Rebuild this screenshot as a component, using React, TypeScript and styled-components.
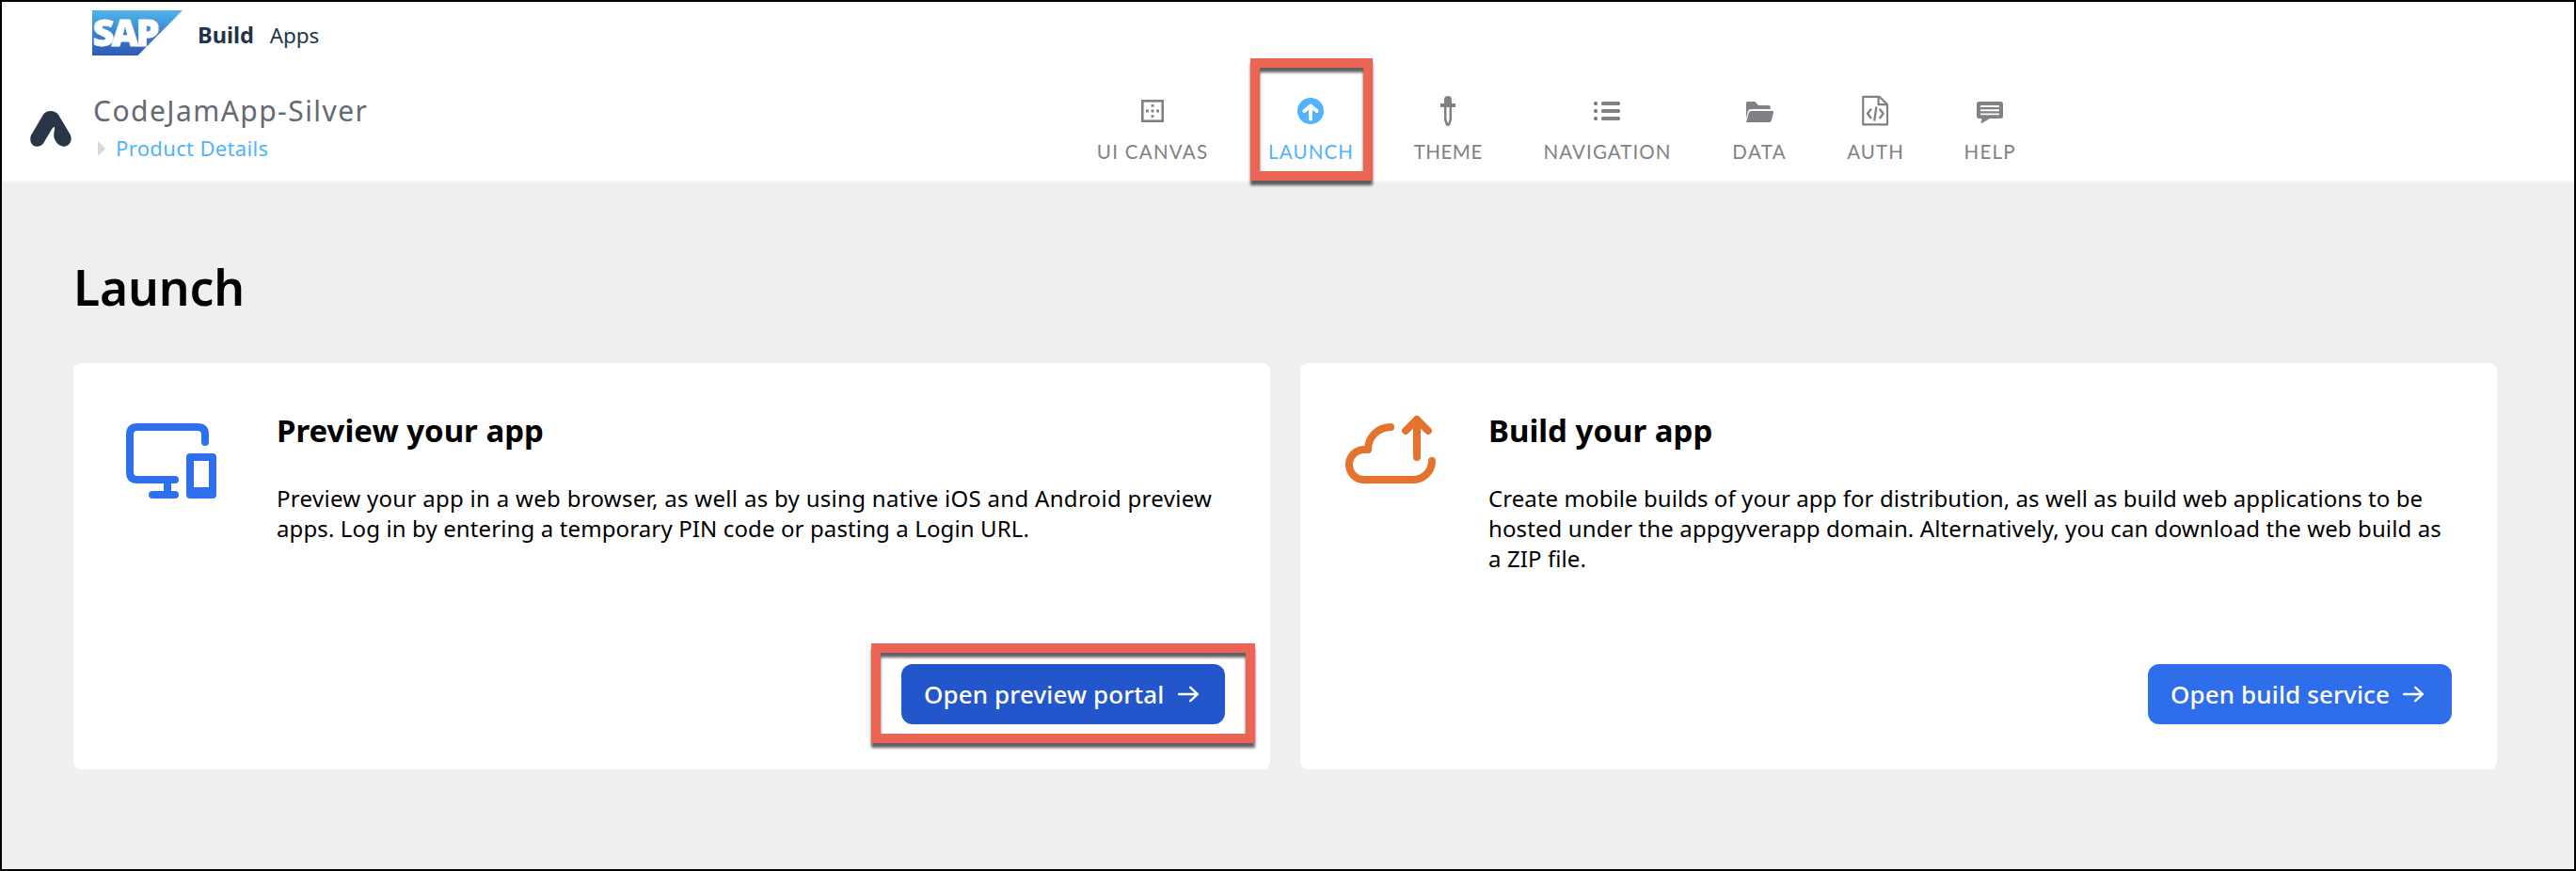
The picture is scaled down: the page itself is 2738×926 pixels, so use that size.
import React from 'react';
import styled, { createGlobalStyle } from 'styled-components';

const GlobalStyle = createGlobalStyle`
  *, *::before, *::after { box-sizing: border-box; }
  body { margin: 0; background: #000; }
`;

const Frame = styled.div`
  display: flex;
  flex-direction: column;
  width: 2738px;
  height: 926px;
  border: 2px solid #000;
  background: #eeeff1;
  color: #000;
  font-family: 'Noto Sans', 'Open Sans', sans-serif;
  overflow: hidden;
`;

const Header = styled.header`
  flex: none;
  height: 192px;
  background: #fff;
  border-bottom: 2px solid #f7f7f8;
`;

const BrandBar = styled.div`
  display: flex;
  align-items: center;
  height: 66px;
  padding-left: 96px;
  color: #223548;
`;

const BrandName = styled.span`
  margin-left: 16px;
  padding-top: 4px;
  font-size: 23.5px;
  font-weight: 700;
`;

const BrandProduct = styled.span`
  margin-left: 17px;
  padding-top: 4px;
  font-size: 22.5px;
  letter-spacing: -0.1px;
`;

const Toolbar = styled.div`
  display: flex;
  align-items: flex-start;
  height: 124px;
  padding-left: 30px;
`;

const AppMark = styled.svg`
  flex: none;
  margin-top: 50px;
`;

const AppInfo = styled.div`
  width: 1067px;
  margin-left: 23px;
  padding-top: 32px;
`;

const AppName = styled.div`
  font-size: 30px;
  line-height: 36px;
  letter-spacing: 1.45px;
  color: #646973;
  white-space: nowrap;
`;

const Breadcrumb = styled.a`
  display: flex;
  align-items: center;
  gap: 11px;
  margin-top: 7px;
  padding-left: 5px;
  font-size: 22px;
  line-height: 28px;
  letter-spacing: 0.35px;
  color: #50b3fb;
`;

const Caret = styled.span`
  margin-top: 2px;
  border-style: solid;
  border-width: 8px 0 8px 8px;
  border-color: transparent transparent transparent #d6d8dc;
`;

const Nav = styled.nav`
  display: flex;
  gap: 66px;
`;

const NavItem = styled.a<{ $width: number; $active?: boolean }>`
  position: relative;
  display: flex;
  flex-direction: column;
  align-items: center;
  width: ${p => p.$width}px;
  padding-top: 32px;
  color: ${p => (p.$active ? '#50b3fb' : '#808187')};
`;

const NavIcon = styled.svg`
  display: block;
  flex: none;
  width: 36px;
  height: 36px;
`;

const NavLabel = styled.span<{ $tracking: number }>`
  margin-top: 12px;
  margin-right: -${p => p.$tracking}px;
  font-family: Lato, sans-serif;
  font-size: 20.5px;
  line-height: 26px;
  letter-spacing: ${p => p.$tracking}px;
  white-space: nowrap;
`;

const Highlight = styled.span<{ $left: number; $top: number; $width: number; $height: number }>`
  position: absolute;
  left: ${p => p.$left}px;
  top: ${p => p.$top}px;
  width: ${p => p.$width}px;
  height: ${p => p.$height}px;
  border: 10px solid #ec6453;
  filter: drop-shadow(0 5px 1.5px rgba(0, 0, 0, 0.62));
  pointer-events: none;
  z-index: 2;
`;

const Main = styled.main`
  padding: 79px 82px 0 76px;
`;

const PageTitle = styled.h1`
  margin: 0 0 49px;
  font-size: 51.5px;
  font-weight: 600;
  line-height: 64px;
  letter-spacing: -0.1px;
`;

const Cards = styled.div`
  display: grid;
  grid-template-columns: 1272px 1272px;
  gap: 32px;
`;

const Card = styled.section<{ $inset: number }>`
  display: grid;
  grid-template-columns: 96px 1fr;
  grid-template-rows: 1fr auto;
  column-gap: ${p => p.$inset + 8}px;
  height: 432px;
  padding: 50px 48px 48px ${p => p.$inset}px;
  border-radius: 8px;
  background: #fff;
`;

const CardIcon = styled.svg<{ $offset: number }>`
  display: block;
  margin-top: ${p => p.$offset}px;
  overflow: visible;
`;

const CardTitle = styled.h2`
  margin: 0 0 34px;
  font-size: 33px;
  font-weight: 700;
  line-height: 44px;
`;

const CardText = styled.p`
  margin: 0;
  font-size: 24px;
  line-height: 32px;
`;

const Line = styled.span<{ $tracking: number }>`
  display: block;
  letter-spacing: ${p => p.$tracking}px;
  white-space: nowrap;
`;

const Action = styled.button<{ $width: number; $pressed?: boolean }>`
  position: relative;
  grid-column: 1 / -1;
  justify-self: end;
  display: flex;
  align-items: center;
  gap: 13px;
  width: ${p => p.$width}px;
  height: 64px;
  padding: 0 0 0 24px;
  border: 0;
  border-radius: 12px;
  background: ${p => (p.$pressed ? '#2456cb' : '#2f6eeb')};
  color: #fff;
  font-family: inherit;
  font-size: 26px;
  font-weight: 550;
  letter-spacing: 0.12px;
  white-space: nowrap;
`;

const LogoSvg = styled.svg`
  flex: none;
  overflow: visible;
`;

const SapLogo = () => (
  <LogoSvg width="96" height="48" viewBox="0 0 96 48">
    <defs>
      <linearGradient id="sap" x1="0" y1="0" x2="0" y2="1">
        <stop offset="0" stopColor="#4fb4ec" />
        <stop offset="0.5" stopColor="#3a83d0" />
        <stop offset="1" stopColor="#3059b6" />
      </linearGradient>
    </defs>
    <path d="M0 0H96L48.5 48H0Z" fill="url(#sap)" />
    <text
      x="0.5"
      y="38"
      fill="#fff"
      stroke="#fff"
      strokeWidth="0.8"
      fontFamily="Noto Sans, sans-serif"
      fontWeight="900"
      fontSize="39.5"
      textLength="71"
      lengthAdjust="spacing"
    >
      SAP
    </text>
  </LogoSvg>
);

const CanvasIcon = () => (
  <NavIcon viewBox="0 0 36 36" fill="currentColor">
    <rect x="7.3" y="7.3" width="21.4" height="21.4" fill="none" stroke="currentColor" strokeWidth="2.6" />
    <path d="M16.6 11h2.8v2.8h-2.8zM16.6 16.6h2.8v2.8h-2.8zM16.6 22.2h2.8V25h-2.8zM11 16.6h2.8v2.8H11zM22.2 16.6H25v2.8h-2.8z" />
  </NavIcon>
);

const LaunchIcon = () => (
  <NavIcon viewBox="0 0 36 36">
    <circle cx="18" cy="18" r="14" fill="currentColor" />
    <path d="M18 26.5V13M11.3 18L18 12.6L24.7 18" fill="none" stroke="#fff" strokeWidth="4" strokeLinecap="round" strokeLinejoin="round" />
  </NavIcon>
);

const ThemeIcon = () => (
  <NavIcon viewBox="0 0 36 36" fill="currentColor">
    <path d="M14 10V6a4 4 0 0 1 8 0V10H26V14H10V10Z" />
    <path d="M15.2 14V27L17 32.6H19L20.8 27V14" fill="none" stroke="currentColor" strokeWidth="2.5" strokeLinejoin="round" />
  </NavIcon>
);

const NavigationIcon = () => (
  <NavIcon viewBox="0 0 36 36" fill="currentColor">
    {[8, 16, 24].map(y => (
      <React.Fragment key={y}>
        <rect x="4" y={y} width="4" height="4" rx="1.5" />
        <rect x="12" y={y} width="20" height="4" rx="1.5" />
      </React.Fragment>
    ))}
  </NavIcon>
);

const DataIcon = () => (
  <NavIcon viewBox="0 0 36 36" fill="currentColor">
    <path d="M4 26V9.500Q4 8 5.500 8H12.500Q13.500 8 14.200 8.800L17 12H27.500Q29.800 12 29.800 14V16H9Q6.500 16 6 18Z" />
    <path d="M9.500 18H32Q33.500 18 33 19.500L30.700 28.600Q30.300 30 29 30H4L6.800 20Q7.500 18 9.500 18Z" />
  </NavIcon>
);

const AuthIcon = () => (
  <NavIcon viewBox="0 0 36 36" fill="none" stroke="currentColor" strokeWidth="2.2" strokeLinejoin="round">
    <path d="M5.200 2.800H22.500L31 11V32.400H5.200Z" />
    <path d="M21.600 3V11.200H30.500" />
    <path d="M14 15.700L10 20.800L14 26M22.700 15.700L26.700 20.800L22.700 26M19.400 13.500L17.200 28.500" strokeWidth="2.3" />
  </NavIcon>
);

const HelpIcon = () => (
  <NavIcon viewBox="0 0 36 36" fill="currentColor">
    <path d="M6.500 8H29.500Q32 8 32 10.500V23.500Q32 26 29.500 26H18L8.500 31.500L9.500 26H6.500Q4 26 4 23.500V10.500Q4 8 6.500 8Z" />
    <path d="M8 13H28M8 17.200H28M8 21.400H28" stroke="#fff" strokeWidth="1.900" />
  </NavIcon>
);

const DevicesIcon = () => (
  <CardIcon $offset={14} width="96" height="80" viewBox="0 0 96 80" fill="none" stroke="#2e6feb" strokeWidth="8" strokeLinecap="round">
    <path d="M84 20V12Q84 4 76 4H12Q4 4 4 12V52Q4 60 12 60H52M28 76H52" />
    <path d="M44 60V76" strokeLinecap="butt" />
    <path d="M68 32H92Q96 32 96 36V76Q96 80 92 80H68Q64 80 64 76V36Q64 32 68 32ZM72 40V68H88V40Z" fill="#2e6feb" fillRule="evenodd" stroke="none" />
  </CardIcon>
);

const CloudIcon = () => (
  <CardIcon $offset={6} width="96" height="72" viewBox="0 0 96 72" fill="none" stroke="#e6732d" strokeWidth="8" strokeLinecap="round" strokeLinejoin="round">
    <path d="M48 12C34 12.500 24 23 24 36H20A16 16 0 0 0 20 68H72A20 20 0 0 0 92 48" />
    <path d="M76 44V4M64 16L76 4L88 16" />
  </CardIcon>
);

const Arrow = () => (
  <svg width="24" height="18" viewBox="0 0 24 18" fill="none" stroke="#fff" strokeWidth="2.300" strokeLinecap="round" strokeLinejoin="round">
    <path d="M2 9H22M14.200 1.800L22 9L14.200 16.200" />
  </svg>
);

const navItems = [
  { label: 'UI CANVAS', width: 117, tracking: 1.28, icon: <CanvasIcon /> },
  { label: 'LAUNCH', width: 88, tracking: 1.16, icon: <LaunchIcon />, active: true },
  { label: 'THEME', width: 72, tracking: 0.5, icon: <ThemeIcon /> },
  { label: 'NAVIGATION', width: 134, tracking: 1.08, icon: <NavigationIcon /> },
  { label: 'DATA', width: 57, tracking: 1.4, icon: <DataIcon /> },
  { label: 'AUTH', width: 58, tracking: 1.07, icon: <AuthIcon /> },
  { label: 'HELP', width: 53, tracking: 1.2, icon: <HelpIcon /> },
];

export default function App() {
  return (
    <Frame>
      <GlobalStyle />
      <Header>
        <BrandBar>
          <SapLogo />
          <BrandName>Build</BrandName>
          <BrandProduct>Apps</BrandProduct>
        </BrandBar>
        <Toolbar>
          <AppMark width="44" height="38" viewBox="96 353 132 115">
            <path
              fill="#283648"
              d="M137 366C148 349 174 349 187 366L224 428C232 443 226 460 212 466C196 471 178 458 173 440C169 425 176 412 174 405C172 403 168 408 165 412L141 452C134 466 118 471 106 464C95 457 94 440 99 430Z"
            />
          </AppMark>
          <AppInfo>
            <AppName>CodeJamApp-Silver</AppName>
            <Breadcrumb>
              <Caret />
              Product Details
            </Breadcrumb>
          </AppInfo>
          <Nav>
            {navItems.map(item => (
              <NavItem key={item.label} $width={item.width} $active={item.active}>
                {item.icon}
                <NavLabel $tracking={item.tracking}>{item.label}</NavLabel>
                {item.active && <Highlight $left={-20} $top={-6} $width={130} $height={130} />}
              </NavItem>
            ))}
          </Nav>
        </Toolbar>
      </Header>
      <Main>
        <PageTitle>Launch</PageTitle>
        <Cards>
          <Card $inset={56}>
            <DevicesIcon />
            <div>
              <CardTitle>Preview your app</CardTitle>
              <CardText>
                <Line $tracking={0.3}>Preview your app in a web browser, as well as by using native iOS and Android preview</Line>
                <Line $tracking={0.12}>apps. Log in by entering a temporary PIN code or pasting a Login URL.</Line>
              </CardText>
            </div>
            <Action $width={344} $pressed>
              Open preview portal
              <Arrow />
              <Highlight $left={-32} $top={-22} $width={408} $height={106} />
            </Action>
          </Card>
          <Card $inset={48}>
            <CloudIcon />
            <div>
              <CardTitle>Build your app</CardTitle>
              <CardText>
                <Line $tracking={0.07}>Create mobile builds of your app for distribution, as well as build web applications to be</Line>
                <Line $tracking={0.11}>hosted under the appgyverapp domain. Alternatively, you can download the web build as</Line>
                <Line $tracking={0.1}>a ZIP file.</Line>
              </CardText>
            </div>
            <Action $width={323}>
              Open build service
              <Arrow />
            </Action>
          </Card>
        </Cards>
      </Main>
    </Frame>
  );
}
